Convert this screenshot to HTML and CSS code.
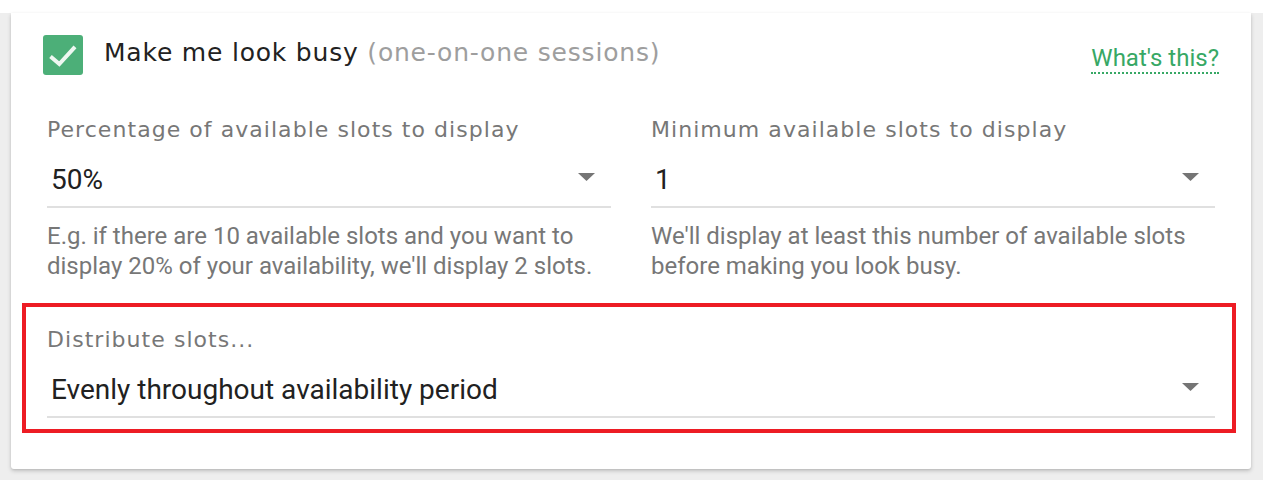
FILE: index.html
```html
<!DOCTYPE html>
<html>
<head>
<meta charset="utf-8">
<link rel="stylesheet" href="styles.css">
</head>
<body>
<div class="top-strip"></div>
<div class="page">
  <div class="card">
    <div class="head">
      <div class="check">
        <svg width="40" height="40" viewBox="0 0 40 40"><path d="M7.5 21.5 L16.3 29 L32 11.8" fill="none" stroke="#eef7f1" stroke-width="4" stroke-linecap="butt" stroke-linejoin="miter"/></svg>
      </div>
      <div class="title">Make me look busy <span class="muted">(one-on-one sessions)</span></div>
      <a class="help-link">What's this?</a>
    </div>
    <div class="fields">
      <div class="field">
        <div class="label">Percentage of available slots to display</div>
        <div class="select"><span class="value">50%</span><svg class="caret" width="17" height="8" viewBox="0 0 17 8"><path d="M0 0 H17 L8.5 8 Z" fill="#757575"/></svg></div>
        <p class="hint">E.g. if there are 10 available slots and you want to<br>display 20% of your availability, we'll display 2 slots.</p>
      </div>
      <div class="field">
        <div class="label">Minimum available slots to display</div>
        <div class="select"><span class="value">1</span><svg class="caret" width="17" height="8" viewBox="0 0 17 8"><path d="M0 0 H17 L8.5 8 Z" fill="#757575"/></svg></div>
        <p class="hint">We'll display at least this number of available slots<br>before making you look busy.</p>
      </div>
    </div>
    <div class="highlight">
      <div class="field">
        <div class="label">Distribute slots...</div>
        <div class="select"><span class="value">Evenly throughout availability period</span><svg class="caret" width="17" height="8" viewBox="0 0 17 8"><path d="M0 0 H17 L8.5 8 Z" fill="#757575"/></svg></div>
      </div>
    </div>
  </div>
</div>
</body>
</html>
```
FILE: styles.css
```css
html, body {
  margin: 0;
  padding: 0;
  background: #ffffff;
}
body {
  font-family: Roboto, "Liberation Sans", sans-serif;
  color: #212121;
}
.top-strip {
  height: 13px;
  background: #ffffff;
}
.page {
  background: #eeeeee;
  padding: 0 12px 11px 11px;
}
.card {
  background: #ffffff;
  border-radius: 0 0 3px 3px;
  box-shadow: 0 2px 4px rgba(0, 0, 0, 0.18), 0 1px 2px rgba(0, 0, 0, 0.08);
  padding: 22px 32px 36px 32px;
}
.head {
  display: flex;
  align-items: center;
  height: 40px;
}
.check {
  width: 40px;
  height: 40px;
  border-radius: 3px;
  background: #4caf78;
  flex: none;
}
.check svg {
  display: block;
}
.title {
  margin-left: 21px;
  font-family: "DejaVu Sans", sans-serif;
  font-size: 25px;
  letter-spacing: 0.8px;
  color: #222222;
  flex: 1;
  margin-top: -5px;
}
.muted {
  color: #9e9e9e;
}
.help-link {
  font-family: Roboto, sans-serif;
  font-size: 24px;
  color: #37a865;
  border-bottom: 2px dotted #37a865;
  line-height: 28px;
  margin-top: 8px;
}
.fields {
  display: grid;
  grid-template-columns: 1fr 1fr;
  column-gap: 40px;
  margin: 42px 4px 0 4px;
}
.label {
  font-family: "DejaVu Sans", sans-serif;
  font-size: 22px;
  letter-spacing: 1.05px;
  line-height: 26px;
  color: #777777;
}
.select {
  margin-top: 20px;
  display: flex;
  align-items: center;
  justify-content: space-between;
  padding: 0 16px 9px 4px;
  border-bottom: 2px solid #e0e0e0;
  height: 34px;
}
.value {
  font-size: 28px;
  line-height: 34px;
  color: #212121;
}
.caret {
  display: block;
  margin-top: -6px;
}
.hint {
  margin: 13px 0 0 0;
  font-size: 24px;
  line-height: 30px;
  color: #777777;
}
.highlight {
  margin: 22px -17px 0 -21px;
  border: 4px solid #ed1c24;
  padding: 20px 17px 11px 21px;
}
```
